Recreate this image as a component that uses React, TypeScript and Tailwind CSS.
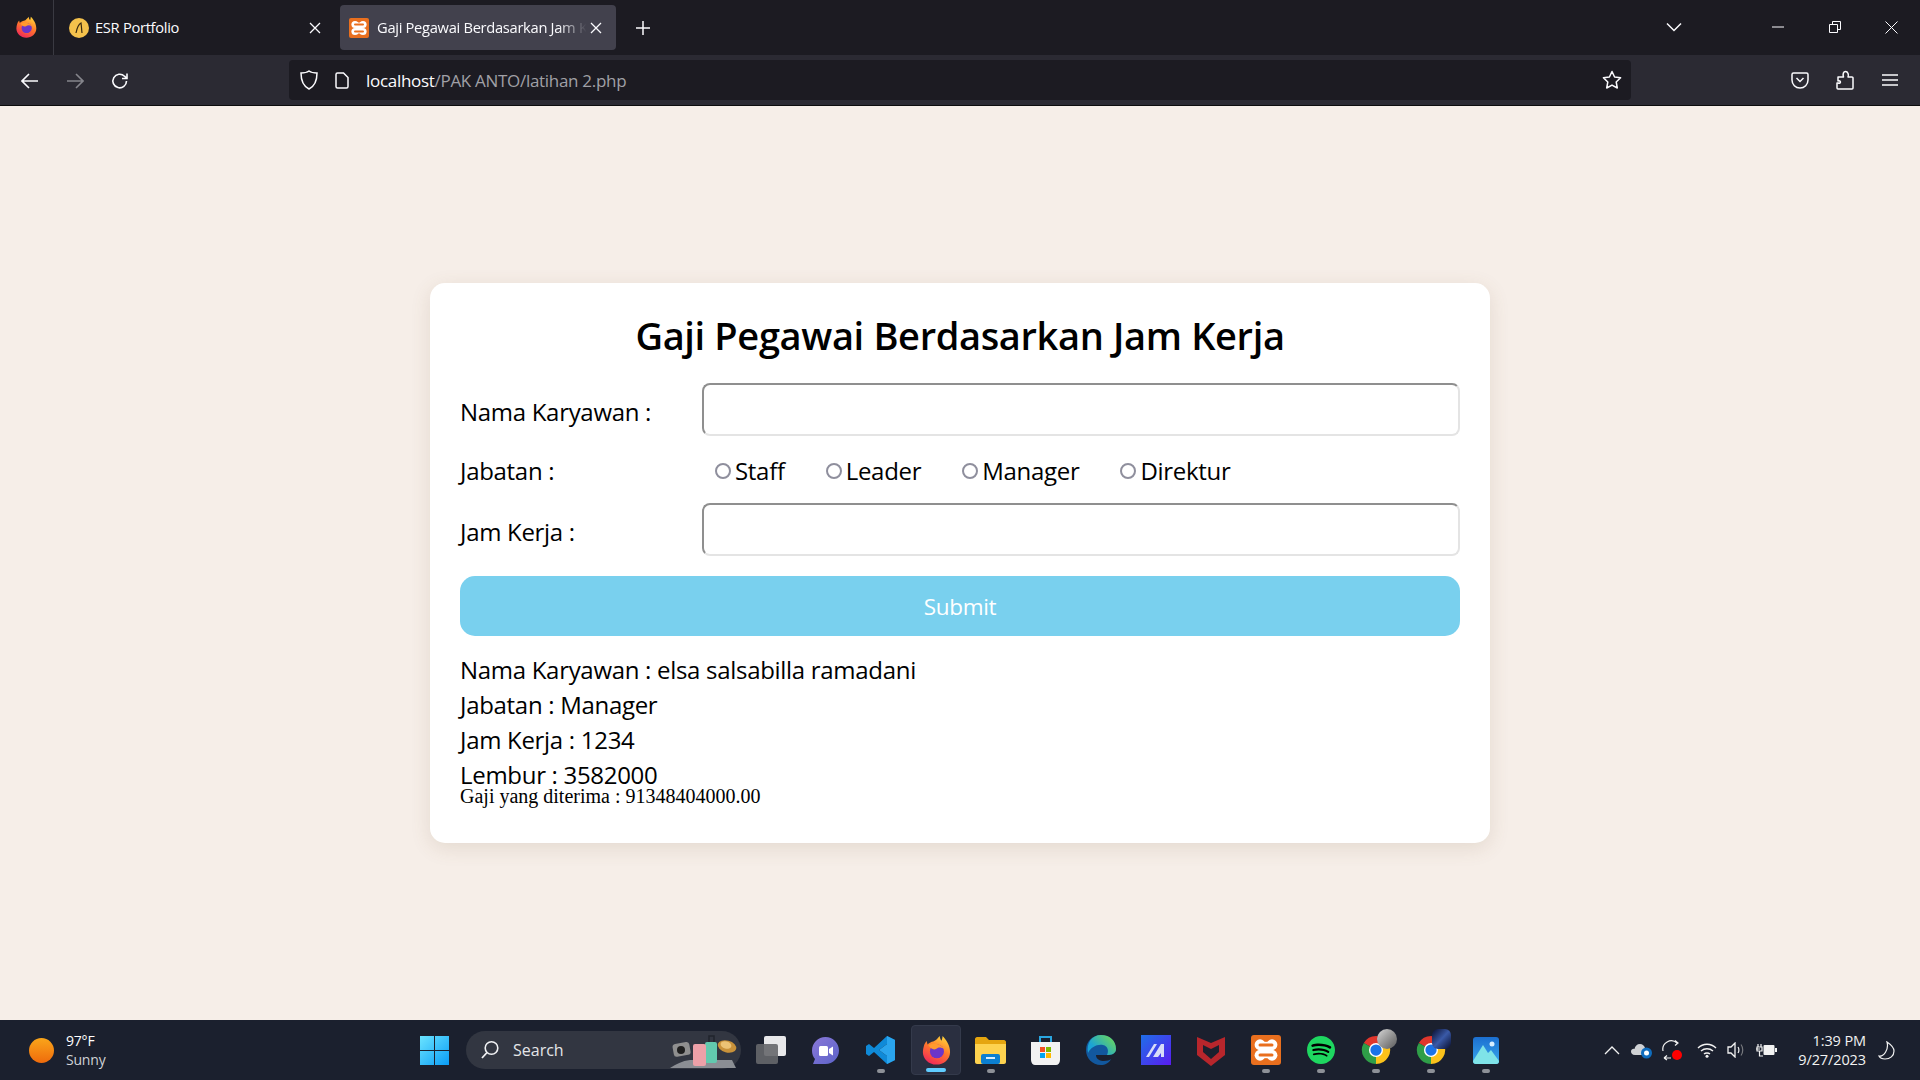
import React from "react";
import { SiSpotify } from "react-icons/si";

const Firefox = ({ size = 24, id }: { size?: number; id: string }) => (
  <svg width={size} height={size} viewBox="0 0 32 32">
    <defs>
      <linearGradient id={id} x1="0.75" y1="0" x2="0.25" y2="1">
        <stop offset="0" stopColor="#ffd53b" />
        <stop offset="0.45" stopColor="#ff7a2a" />
        <stop offset="1" stopColor="#f0245c" />
      </linearGradient>
    </defs>
    <path d="M3 12 C3.5 10 4.5 8 6 6.5 L7 10 C9 8 11 7.5 13 7 C16 6 18 3 20 1 C20 3.5 21 5 22 6 C22.5 4 23 2.5 23 1 C27 5 31 11 31 18 C31 26 24 31.5 16.5 31.5 C8 31.5 2 25 2 18 C2 16 2.5 14 3 12Z" fill={`url(#${id})`} />
    <circle cx="17" cy="17.5" r="7.5" fill="#6b35c9" />
    <path d="M8 11 C12 8 21 9 25 15 C21 12.5 18 13 16 15 C13.5 16 10 15 8 11Z" fill="#ff9a2e" />
    <path d="M9.5 20 C12 27 22 27 25 19 C24.5 26 14 30 9.5 20Z" fill="#ff5c3a" />
  </svg>
);

const Xampp = ({ size = 20 }: { size?: number }) => (
  <svg width={size} height={size} viewBox="0 0 20 20">
    <rect width="20" height="20" rx="2" fill="#e96f1e" />
    <circle cx="6" cy="6.5" r="3.6" fill="#fff" />
    <circle cx="14" cy="6.5" r="3.6" fill="#fff" />
    <circle cx="6" cy="13.5" r="3.6" fill="#fff" />
    <circle cx="14" cy="13.5" r="3.6" fill="#fff" />
    <rect x="6.5" y="4.5" width="7" height="11" fill="#fff" />
    <path d="M8.5 2.5 L10 4.5 L11.5 2.5Z M8.5 17.5 L10 15.5 L11.5 17.5Z" fill="#e96f1e" />
    <path d="M6 6.6 H14 M6 13.4 H14" stroke="#e96f1e" strokeWidth="2" strokeLinecap="round" />
  </svg>
);

const Chrome = () => (
  <svg width="30" height="30" viewBox="0 0 32 32">
    <path d="M16 16 L3 8.5 A15 15 0 0 1 29 8.5Z" fill="#e0362c" />
    <path d="M16 16 L29 8.5 A15 15 0 0 1 16 31Z" fill="#fbc21b" />
    <path d="M16 16 L16 31 A15 15 0 0 1 3 8.5Z" fill="#2f9e48" />
    <circle cx="16" cy="16" r="7.5" fill="#fff" />
    <circle cx="16" cy="16" r="6" fill="#1a73e8" />
  </svg>
);

const VsCode = () => (
  <svg width="30" height="30" viewBox="0 0 30 30">
    <path d="M21 1 L29 5 V25 L21 29 L8 17 L3 21 L0 19 V11 L3 9 L8 13Z M21 9 L13 15 L21 21Z" fill="#0f8ad8" fillRule="evenodd" />
    <path d="M21 1 L29 5 V25 L21 29Z M21 9 V21 L13 15Z" fill="#2aa5ee" fillRule="evenodd" />
  </svg>
);

const Dot = ({ active }: { active?: boolean }) => (
  <span className={active ? "absolute bottom-[2px] left-[14px] h-[4px] w-[20px] rounded-full bg-[#60cdff]" : "absolute bottom-[2px] left-[24px] h-[4px] w-[8px] rounded-full bg-[#8d9097]"} />
);

const TaskIcon = ({ children, dot, active }: { children: React.ReactNode; dot?: boolean; active?: boolean }) => (
  <div className={active ? "relative flex h-[50px] w-[50px] mx-[2.5px] items-center justify-center rounded-[4px] border border-[#343a4b] bg-[#2a2f40]" : "relative flex h-[50px] w-[55px] items-center justify-center"}>
    {children}
    {dot && <Dot active={active} />}
  </div>
);

const Radio = ({ label }: { label: string }) => (
  <label className="flex items-center">
    <span className="ml-[13px] mr-[4px] h-[16px] w-[16px] rounded-full border-2 border-[#8f8f9d] bg-white" />
    <span>{label}</span>
  </label>
);

const TextBox = () => (
  <input type="text" className="h-[53px] w-[758px] rounded-[8px] border-2 border-t-[#8f8f8f] border-l-[#8f8f8f] border-r-[#e4e4e4] border-b-[#e4e4e4] bg-white" />
);

export default function App() {
  return (
    <div className="flex h-screen w-full flex-col overflow-hidden bg-[#f6eee8] font-['Open_Sans',sans-serif]">
      {/* tabs */}
      <div className="flex h-[55px] shrink-0 items-center bg-[#1c1b22] text-[#fbfbfe]">
        <div className="flex h-[55px] w-[54px] items-center justify-center border-r border-[#3a3a42] pb-[2px] pr-[2px]">
          <Firefox size={22} id="fftab" />
        </div>
        <div className="ml-[15px] flex h-[45px] w-[271px] items-center">
          <svg width="20" height="20" viewBox="0 0 20 20">
            <circle cx="10" cy="10" r="10" fill="#f5c24c" />
            <path d="M7 15 C8 10 10 6 12 5 C12.5 8 12.5 11 13 15" fill="none" stroke="#3a2a10" strokeWidth="1.2" />
          </svg>
          <span className="ml-[6px] w-[200px] text-[14.7px] tracking-[-0.3px]">ESR Portfolio</span>
          <svg className="ml-[14px]" width="12" height="12" viewBox="0 0 12 12"><path d="M1 1 L11 11 M11 1 L1 11" stroke="#fbfbfe" strokeWidth="1.3" /></svg>
        </div>
        <div className="flex h-[45px] w-[276px] items-center rounded-[4px] bg-[#42414d] pl-[9px]">
          <Xampp size={20} />
          <span className="ml-[8px] w-[216px] overflow-hidden whitespace-nowrap text-[14.7px] tracking-[-0.3px] [mask-image:linear-gradient(to_right,black_84%,transparent_97%)]">Gaji Pegawai Berdasarkan Jam Kerja</span>
          <svg className="-ml-[3px]" width="12" height="12" viewBox="0 0 12 12"><path d="M1 1 L11 11 M11 1 L1 11" stroke="#fbfbfe" strokeWidth="1.3" /></svg>
        </div>
        <svg className="ml-[19px]" width="16" height="16" viewBox="0 0 16 16"><path d="M8 1 V15 M1 8 H15" stroke="#fbfbfe" strokeWidth="1.5" /></svg>
        <div className="ml-auto flex items-center pb-[1px]">
          <svg width="16" height="10" viewBox="0 0 16 10"><path d="M1 1.5 L8 8.5 L15 1.5" fill="none" stroke="#fbfbfe" strokeWidth="1.5" /></svg>
          <svg className="ml-[90px]" width="12" height="2" viewBox="0 0 12 2"><path d="M0 1 H12" stroke="#fbfbfe" strokeWidth="1" /></svg>
          <svg className="ml-[45px]" width="12" height="12" viewBox="0 0 12 12"><path d="M.5 3.5 H8.5 V11.5 H.5Z M3.5 3 V.5 H11.5 V8.5 H9" fill="none" stroke="#fbfbfe" strokeWidth="1" /></svg>
          <svg className="ml-[44px] mr-[22px]" width="13" height="13" viewBox="0 0 13 13"><path d="M.5 .5 L12.5 12.5 M12.5 .5 L.5 12.5" stroke="#fbfbfe" strokeWidth="1" /></svg>
        </div>
      </div>

      {/* toolbar */}
      <div className="flex h-[51px] shrink-0 items-center border-b border-[#0c0c0d] bg-[#2b2a33] text-[#fbfbfe]">
        <svg className="ml-[21px] mt-[1px]" width="18" height="16" viewBox="0 0 18 16"><path d="M8 1 L1 8 L8 15 M1 8 H17" fill="none" stroke="#fbfbfe" strokeWidth="1.6" /></svg>
        <svg className="ml-[27px] mt-[1px]" width="18" height="16" viewBox="0 0 18 16"><path d="M10 1 L17 8 L10 15 M17 8 H1" fill="none" stroke="#85858c" strokeWidth="1.6" /></svg>
        <svg className="ml-[27px] mt-[1px]" width="18" height="18" viewBox="0 0 18 18"><path d="M15.5 9 A6.8 6.8 0 1 1 13.5 4.2 L16 6.5 M16 1.5 V6.5 H11" fill="none" stroke="#fbfbfe" strokeWidth="1.6" /></svg>
        <div className="ml-[160px] flex h-[40px] w-[1342px] items-center rounded-[4px] bg-[#1c1b22] pl-[11px]">
          <svg width="18" height="20" viewBox="0 0 18 20"><path d="M9 1 C11 2.5 14 3 17 3 C17 10 15 16 9 19 C3 16 1 10 1 3 C4 3 7 2.5 9 1Z" fill="none" stroke="#fbfbfe" strokeWidth="1.5" /></svg>
          <svg className="ml-[17px]" width="14" height="17" viewBox="0 0 14 17"><path d="M1 2.5 C1 1.5 1.5 1 2.5 1 H8.5 L13 5.5 V14.5 C13 15.5 12.5 16 11.5 16 H2.5 C1.5 16 1 15.5 1 14.5Z" fill="none" stroke="#fbfbfe" strokeWidth="1.5" /></svg>
          <div className="ml-[17px] pt-[2px] text-[17px] tracking-[-0.3px]">localhost<span className="text-[#a0a0a6]">/PAK ANTO/latihan 2.php</span></div>
          <svg className="ml-auto mr-[9px]" width="20" height="20" viewBox="0 0 20 20"><path d="M10 1.5 L12.6 7 L18.6 7.8 L14.2 12 L15.3 18 L10 15.1 L4.7 18 L5.8 12 L1.4 7.8 L7.4 7Z" fill="none" stroke="#fbfbfe" strokeWidth="1.5" strokeLinejoin="round" /></svg>
        </div>
        <svg className="ml-[160px]" width="18" height="17" viewBox="0 0 18 17"><path d="M1 2.5 C1 1.5 1.5 1 2.5 1 H15.5 C16.5 1 17 1.5 17 2.5 V8 C17 12.5 13.5 16 9 16 C4.5 16 1 12.5 1 8Z M5.5 6 L9 9.5 L12.5 6" fill="none" stroke="#fbfbfe" strokeWidth="1.5" /></svg>
        <svg className="ml-[27px]" width="18" height="20" viewBox="0 0 18 20"><path d="M1 13 V18 C1 18.6 1.4 19 2 19 H16 C16.6 19 17 18.6 17 18 V8 C17 7.4 16.6 7 16 7 H12 C13 5 12 1.5 9.5 1.5 C7.5 1.5 6.5 4 7.5 7 H2 V11 C5 10 5.5 14 2 13Z" fill="none" stroke="#fbfbfe" strokeWidth="1.5" strokeLinejoin="round" /></svg>
        <svg className="ml-[28px]" width="16" height="14" viewBox="0 0 16 14"><path d="M0 2 H16 M0 7 H16 M0 12 H16" stroke="#fbfbfe" strokeWidth="1.5" /></svg>
      </div>

      {/* page */}
      <main className="flex flex-1 items-center justify-center">
        <div className="h-[560px] w-[1060px] rounded-[15px] bg-white px-[30px] pt-[27px] text-[24px] leading-[35px] tracking-[-0.3px] text-black shadow-[0_5px_20px_rgba(120,90,60,0.14)]">
          <h1 className="mb-[23px] text-center text-[38px] leading-[50px] font-semibold tracking-[-0.35px]">Gaji Pegawai Berdasarkan Jam Kerja</h1>
          <div className="flex h-[53px] items-center">
            <span className="mt-[3px] w-[242px]">Nama Karyawan :</span>
            <TextBox />
          </div>
          <div className="mt-[18px] flex h-[33px] items-center">
            <span className="w-[242px]">Jabatan :</span>
            <div className="flex gap-[28px]">
              <Radio label="Staff" />
              <Radio label="Leader" />
              <Radio label="Manager" />
              <Radio label="Direktur" />
            </div>
          </div>
          <div className="mt-[16px] flex h-[53px] items-center">
            <span className="mt-[3px] w-[242px]">Jam Kerja :</span>
            <TextBox />
          </div>
          <button type="button" className="mt-[20px] h-[60px] w-full rounded-[15px] bg-[#79d0ee] text-[22.5px] text-white">Submit</button>
          <div className="mt-[16px]">
            <div>Nama Karyawan : elsa salsabilla ramadani</div>
            <div>Jabatan : Manager</div>
            <div>Jam Kerja : 1234</div>
            <div className="h-[28px]">Lembur : 3582000</div>
            <div className="font-['Liberation_Serif',serif] text-[20px] leading-[23px] tracking-normal">Gaji yang diterima : 91348404000.00</div>
          </div>
        </div>
      </main>

      {/* taskbar */}
      <div className="flex h-[60px] shrink-0 items-center bg-[#1b202e] text-white">
        <div className="flex w-[407px] items-center pl-[29px]">
          <span className="h-[25px] w-[25px] rounded-full bg-gradient-to-b from-[#f9a51a] to-[#ee6a0c]" />
          <div className="ml-[12px] text-[14px] leading-[19px] tracking-[-0.2px]">
            <div>97°F</div>
            <div className="text-[#d0d2d6]">Sunny</div>
          </div>
        </div>
        <div className="flex w-[55px] justify-center">
          <svg width="29" height="29" viewBox="0 0 29 29">
            <defs>
              <linearGradient id="win" x1="0" y1="0" x2="1" y2="1">
                <stop offset="0" stopColor="#6be4ff" />
                <stop offset="1" stopColor="#0a9cf5" />
              </linearGradient>
            </defs>
            <path d="M0 0 H14 V14 H0Z M15 0 H29 V14 H15Z M0 15 H14 V29 H0Z M15 15 H29 V29 H15Z" fill="url(#win)" />
          </svg>
        </div>
        <div className="relative ml-[4px] flex h-[38px] w-[275px] items-center rounded-full bg-[#323641] pl-[14px]">
          <svg width="20" height="20" viewBox="0 0 20 20"><circle cx="11.5" cy="8" r="6.3" fill="none" stroke="#f1f2f4" strokeWidth="1.6" /><path d="M7 12.5 L2 18" stroke="#f1f2f4" strokeWidth="1.8" /></svg>
          <span className="ml-[13px] text-[16px] text-[#e4e5e8]">Search</span>
          <svg className="absolute top-[2px] right-[3px]" width="70" height="36" viewBox="0 0 70 36">
            <path d="M2 35 C8 31 14 28 22 27 H64 L68 35Z" fill="#8b8e94" />
            <rect x="5" y="10" width="17" height="13" rx="3" fill="#8f8f8f" transform="rotate(-10 13 16)" />
            <circle cx="13" cy="17" r="4" fill="#1f1f1f" />
            <path d="M41 9 V3 H46 V9" fill="none" stroke="#20242c" strokeWidth="1.5" />
            <rect x="37" y="9" width="12" height="21" rx="2" fill="#62c9ae" />
            <rect x="25" y="11" width="13" height="22" rx="2" fill="#eda0a8" />
            <ellipse cx="59" cy="13.5" rx="9.5" ry="6" fill="#c9923a" transform="rotate(15 59 13.5)" />
            <ellipse cx="58" cy="12" rx="5.5" ry="3.5" fill="#ecc375" transform="rotate(15 58 12)" />
          </svg>
        </div>
        <div className="ml-[2px] flex items-center">
          <TaskIcon>
            <div className="relative h-[28px] w-[30px]">
              <span className="absolute right-0 top-0 h-[20px] w-[22px] rounded-[2px] bg-[#e8e8ea]" />
              <span className="absolute bottom-0 left-0 h-[20px] w-[22px] rounded-[2px] bg-[#66676b]/90" />
            </div>
          </TaskIcon>
          <TaskIcon>
            <svg width="29" height="29" viewBox="0 0 29 29">
              <defs>
                <linearGradient id="chat" x1="0" y1="0" x2="1" y2="1">
                  <stop offset="0" stopColor="#8a78d8" />
                  <stop offset="1" stopColor="#5c63c9" />
                </linearGradient>
              </defs>
              <path d="M14.5 1 C22 1 28 7 28 14.5 C28 22 22 28 14.5 28 H2 L4 23 C2 21 1 18 1 14.5 C1 7 7 1 14.5 1Z" fill="url(#chat)" />
              <rect x="8" y="10" width="9" height="10" rx="1.5" fill="#fff" />
              <path d="M18 13 L22 10.5 V19.5 L18 17Z" fill="#fff" />
            </svg>
          </TaskIcon>
          <TaskIcon dot><VsCode /></TaskIcon>
          <TaskIcon dot active><Firefox size={30} id="ffbar" /></TaskIcon>
          <TaskIcon dot>
            <svg width="31" height="27" viewBox="0 0 31 27">
              <path d="M0 2 C0 1 1 0 2 0 H11 L14 3 H29 C30 3 31 4 31 5 V8 H0Z" fill="#e5a50f" />
              <path d="M0 7 H31 V25 C31 26 30 27 29 27 H2 C1 27 0 26 0 25Z" fill="#fdd24f" />
              <rect x="6" y="17" width="19" height="10" rx="2" fill="#0b7fd1" />
              <rect x="11" y="20" width="9" height="2" fill="#d5eeff" />
            </svg>
          </TaskIcon>
          <TaskIcon>
            <svg width="29" height="30" viewBox="0 0 29 30">
              <path d="M9 8 V2 H20 V8" fill="none" stroke="#2aa6e0" strokeWidth="2" />
              <path d="M0 7 H29 V25 C29 28 27 30 25 30 H4 C2 30 0 28 0 25Z" fill="#f2f2f2" />
              <rect x="9" y="12" width="5" height="5" fill="#f25022" />
              <rect x="15" y="12" width="5" height="5" fill="#7fba00" />
              <rect x="9" y="18" width="5" height="5" fill="#00a4ef" />
              <rect x="15" y="18" width="5" height="5" fill="#ffb900" />
            </svg>
          </TaskIcon>
          <TaskIcon>
            <svg width="30" height="30" viewBox="0 0 30 30">
              <defs>
                <linearGradient id="edge" x1="0.9" y1="0.1" x2="0.2" y2="0.6">
                  <stop offset="0" stopColor="#6ad65c" />
                  <stop offset="1" stopColor="#1ba3d6" />
                </linearGradient>
              </defs>
              <path d="M15 0 C24 0 30 6 30 14 C30 19 25 20 21 20 H10 C10 24 14 26 18 26 C21 26 24 25 25 24 C23 28 19 30 15 30 C6 30 0 23 0 15 C0 7 6 0 15 0Z" fill="#12589e" />
              <path d="M15 0 C24 0 30 6 30 14 C30 19 25 20 21 20 C23 16 22 11 17 10 C11 9 5 12 2 18 C0 8 6 0 15 0Z" fill="url(#edge)" />
            </svg>
          </TaskIcon>
          <TaskIcon>
            <svg width="30" height="30" viewBox="0 0 30 30">
              <defs>
                <linearGradient id="ms" x1="0" y1="0" x2="1" y2="1">
                  <stop offset="0" stopColor="#1f6fe8" />
                  <stop offset="1" stopColor="#5a1cf0" />
                </linearGradient>
              </defs>
              <rect width="30" height="30" fill="url(#ms)" />
              <path d="M5 22 L13 9 H16 L8 22Z M12 22 L20 9 H23 V22 H20 V18 L17 22Z" fill="#d8dcf8" />
            </svg>
          </TaskIcon>
          <TaskIcon>
            <svg width="28" height="32" viewBox="0 0 28 32">
              <path d="M0 3 L14 9 L28 3 V21 L14 32 L0 21Z M6 11 V18 L14 25 L22 18 V11 L14 15Z" fill="#b8262c" fillRule="evenodd" />
            </svg>
          </TaskIcon>
          <TaskIcon dot><Xampp size={30} /></TaskIcon>
          <TaskIcon dot>
            <span className="relative flex h-[28px] w-[28px] items-center justify-center">
              <span className="absolute h-[22px] w-[22px] rounded-full bg-black" />
              <SiSpotify size={28} color="#1ed760" className="relative" />
            </span>
          </TaskIcon>
          <TaskIcon dot>
            <span className="relative flex"><Chrome />
              <span className="absolute -top-[6px] left-[16px] h-[20px] w-[20px] rounded-full bg-gradient-to-br from-[#d8d8d8] to-[#5a5a5a]" />
            </span>
          </TaskIcon>
          <TaskIcon dot>
            <span className="relative flex"><Chrome />
              <span className="absolute -top-[6px] left-[16px] h-[20px] w-[19px] rounded-[6px] bg-gradient-to-br from-[#0a1030] via-[#3a5aa8] to-[#0a1030]" />
            </span>
          </TaskIcon>
          <TaskIcon dot>
            <svg width="26" height="27" viewBox="0 0 26 27">
              <defs>
                <linearGradient id="ph" x1="0" y1="0" x2="0" y2="1">
                  <stop offset="0" stopColor="#1c6fd0" />
                  <stop offset="1" stopColor="#38a8ee" />
                </linearGradient>
              </defs>
              <rect width="26" height="27" rx="3" fill="url(#ph)" />
              <circle cx="19" cy="7" r="2.5" fill="#d8eeff" />
              <path d="M0 24 L10 8 L15 16 L18 13 L26 24 V24 C26 26 25 27 23 27 H3 C1 27 0 26 0 24Z" fill="#7fe3e8" />
            </svg>
          </TaskIcon>
        </div>
        <div className="ml-auto flex items-center">
          <svg width="16" height="9" viewBox="0 0 16 9"><path d="M1 8 L8 1 L15 8" fill="none" stroke="#f2f2f2" strokeWidth="1.3" /></svg>
          <svg className="ml-[11px]" width="22" height="18" viewBox="0 0 22 18">
            <path d="M4 14 C1 14 0 12 0 10.5 C0 8.5 2 7.5 3.5 8 C4 5 6 3 9 3 C11.5 3 13.5 5 14 7 L14 14Z" fill="#cfd1d4" />
            <circle cx="15.5" cy="12" r="5.5" fill="#0f6cbd" />
            <circle cx="15.5" cy="12" r="2.5" fill="#fff" />
          </svg>
          <svg className="ml-[9px]" width="21" height="21" viewBox="0 0 21 21">
            <path d="M1 11 A8.5 8.5 0 0 1 15 3 M13 0.5 L16 3 L13 5.5 M2 18 L5 15.5 M2 18 L5 20 M2 18 H9" fill="none" stroke="#f2f2f2" strokeWidth="1.2" />
            <circle cx="15" cy="15" r="5" fill="#f00" />
          </svg>
          <svg className="ml-[14px]" width="20" height="15" viewBox="0 0 20 15"><path d="M1 5 C6 0 14 0 19 5 M4 8 C7.5 5 12.5 5 16 8 M7 11 C8.5 9.6 11.5 9.6 13 11" fill="none" stroke="#f2f2f2" strokeWidth="1.4" /><circle cx="10" cy="13.3" r="1.5" fill="#f2f2f2" /></svg>
          <svg className="ml-[10px]" width="20" height="16" viewBox="0 0 20 16"><path d="M1 5 H4 L8 1 V15 L4 11 H1Z" fill="none" stroke="#f2f2f2" strokeWidth="1.3" /><path d="M11 5 C12.2 6.5 12.2 9.5 11 11" fill="none" stroke="#f2f2f2" strokeWidth="1.2" /><path d="M14 2.5 C16.3 5.5 16.3 10.5 14 13.5" fill="none" stroke="#77797e" strokeWidth="1.2" /></svg>
          <svg className="ml-[9px]" width="21" height="16" viewBox="0 0 21 16"><path d="M0 7 H4 M2 2 V5 M5 2 V5 M1 5 H6 V9 H1Z M3.5 9 V14 H7" fill="none" stroke="#f2f2f2" strokeWidth="1.2" /><rect x="7.5" y="3" width="11" height="10" rx="1" fill="#f2f2f2" /><rect x="19" y="6" width="2" height="4" fill="#f2f2f2" /></svg>
          <div className="ml-[9px] w-[80px] text-right text-[14.5px] leading-[19px] tracking-[-0.1px] text-[#f2f2f2]">
            <div>1:39 PM</div>
            <div>9/27/2023</div>
          </div>
          <svg className="ml-[12px] mr-[25px]" width="17" height="19" viewBox="0 0 17 19"><path d="M9 1 C12 3 16 6 16 10 C16 15 12 18 7 18 C4 18 2 17 1 15 C6 16 11 8 9 1Z" fill="none" stroke="#f2f2f2" strokeWidth="1.2" /></svg>
        </div>
      </div>
    </div>
  );
}
